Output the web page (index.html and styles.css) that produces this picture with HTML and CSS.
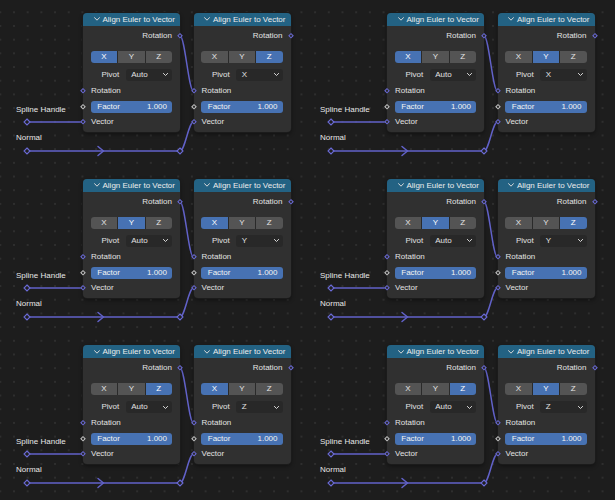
FILE: index.html
```html
<!DOCTYPE html>
<html lang="en">
<head>
<meta charset="utf-8">
<title>Align Euler to Vector</title>
<link rel="stylesheet" href="styles.css">
</head>
<body>
<main class="canvas">

  <!-- group 1 -->
  <section class="group">
    <svg class="links" width="304" height="166" viewBox="0 0 304 166">
      <path class="wire" d="M27 122H83"/>
      <path class="wire" d="M27 151H180"/>
      <path class="wire" d="M98 146.5L103.5 151L98 155.5"/>
      <path class="wire" d="M180 36C185 36 188.5 91 193.5 91"/>
      <path class="wire" d="M180 151C185 151 188.5 122 193.5 122"/>
      <path class="knob" d="M27 119L30 122L27 125L24 122Z"/>
      <path class="knob" d="M27 148L30 151L27 154L24 151Z"/>
      <path class="knob" d="M180 148L183 151L180 154L177 151Z"/>
    </svg>
    <span class="tag tag-spline">Spline Handle</span>
    <span class="tag tag-normal">Normal</span>
    <div class="node node-a">
      <div class="node-header"><svg class="chev" width="6" height="4" viewBox="0 0 6 4"><path d="M0.5 0.6L3 3.2L5.5 0.6"/></svg><span>Align Euler to Vector</span></div>
      <div class="node-body">
        <div class="row row-out">Rotation<i class="sock sock-out"></i></div>
        <div class="seg"><span class="on">X</span><span>Y</span><span>Z</span></div>
        <div class="prop"><span class="prop-label">Pivot</span><span class="dropdown">Auto<svg class="dd-chev" width="5" height="3" viewBox="0 0 5 3"><path d="M0.4 0.4L2.5 2.5L4.6 0.4"/></svg></span></div>
        <div class="row">Rotation<i class="sock"></i></div>
        <div class="row-slider"><div class="slider"><span>Factor</span><span>1.000</span></div><i class="sock sock-float"></i></div>
        <div class="row">Vector<i class="sock"></i></div>
      </div>
    </div>
    <div class="node node-b">
      <div class="node-header"><svg class="chev" width="6" height="4" viewBox="0 0 6 4"><path d="M0.5 0.6L3 3.2L5.5 0.6"/></svg><span>Align Euler to Vector</span></div>
      <div class="node-body">
        <div class="row row-out">Rotation<i class="sock sock-out"></i></div>
        <div class="seg"><span>X</span><span>Y</span><span class="on">Z</span></div>
        <div class="prop"><span class="prop-label">Pivot</span><span class="dropdown">X<svg class="dd-chev" width="5" height="3" viewBox="0 0 5 3"><path d="M0.4 0.4L2.5 2.5L4.6 0.4"/></svg></span></div>
        <div class="row">Rotation<i class="sock"></i></div>
        <div class="row-slider"><div class="slider"><span>Factor</span><span>1.000</span></div><i class="sock sock-float"></i></div>
        <div class="row">Vector<i class="sock"></i></div>
      </div>
    </div>
  </section>

  <!-- group 2 -->
  <section class="group">
    <svg class="links" width="304" height="166" viewBox="0 0 304 166">
      <path class="wire" d="M27 122H83"/>
      <path class="wire" d="M27 151H180"/>
      <path class="wire" d="M98 146.5L103.5 151L98 155.5"/>
      <path class="wire" d="M180 36C185 36 188.5 91 193.5 91"/>
      <path class="wire" d="M180 151C185 151 188.5 122 193.5 122"/>
      <path class="knob" d="M27 119L30 122L27 125L24 122Z"/>
      <path class="knob" d="M27 148L30 151L27 154L24 151Z"/>
      <path class="knob" d="M180 148L183 151L180 154L177 151Z"/>
    </svg>
    <span class="tag tag-spline">Spline Handle</span>
    <span class="tag tag-normal">Normal</span>
    <div class="node node-a">
      <div class="node-header"><svg class="chev" width="6" height="4" viewBox="0 0 6 4"><path d="M0.5 0.6L3 3.2L5.5 0.6"/></svg><span>Align Euler to Vector</span></div>
      <div class="node-body">
        <div class="row row-out">Rotation<i class="sock sock-out"></i></div>
        <div class="seg"><span class="on">X</span><span>Y</span><span>Z</span></div>
        <div class="prop"><span class="prop-label">Pivot</span><span class="dropdown">Auto<svg class="dd-chev" width="5" height="3" viewBox="0 0 5 3"><path d="M0.4 0.4L2.5 2.5L4.6 0.4"/></svg></span></div>
        <div class="row">Rotation<i class="sock"></i></div>
        <div class="row-slider"><div class="slider"><span>Factor</span><span>1.000</span></div><i class="sock sock-float"></i></div>
        <div class="row">Vector<i class="sock"></i></div>
      </div>
    </div>
    <div class="node node-b">
      <div class="node-header"><svg class="chev" width="6" height="4" viewBox="0 0 6 4"><path d="M0.5 0.6L3 3.2L5.5 0.6"/></svg><span>Align Euler to Vector</span></div>
      <div class="node-body">
        <div class="row row-out">Rotation<i class="sock sock-out"></i></div>
        <div class="seg"><span>X</span><span class="on">Y</span><span>Z</span></div>
        <div class="prop"><span class="prop-label">Pivot</span><span class="dropdown">X<svg class="dd-chev" width="5" height="3" viewBox="0 0 5 3"><path d="M0.4 0.4L2.5 2.5L4.6 0.4"/></svg></span></div>
        <div class="row">Rotation<i class="sock"></i></div>
        <div class="row-slider"><div class="slider"><span>Factor</span><span>1.000</span></div><i class="sock sock-float"></i></div>
        <div class="row">Vector<i class="sock"></i></div>
      </div>
    </div>
  </section>

  <!-- group 3 -->
  <section class="group">
    <svg class="links" width="304" height="166" viewBox="0 0 304 166">
      <path class="wire" d="M27 122H83"/>
      <path class="wire" d="M27 151H180"/>
      <path class="wire" d="M98 146.5L103.5 151L98 155.5"/>
      <path class="wire" d="M180 36C185 36 188.5 91 193.5 91"/>
      <path class="wire" d="M180 151C185 151 188.5 122 193.5 122"/>
      <path class="knob" d="M27 119L30 122L27 125L24 122Z"/>
      <path class="knob" d="M27 148L30 151L27 154L24 151Z"/>
      <path class="knob" d="M180 148L183 151L180 154L177 151Z"/>
    </svg>
    <span class="tag tag-spline">Spline Handle</span>
    <span class="tag tag-normal">Normal</span>
    <div class="node node-a">
      <div class="node-header"><svg class="chev" width="6" height="4" viewBox="0 0 6 4"><path d="M0.5 0.6L3 3.2L5.5 0.6"/></svg><span>Align Euler to Vector</span></div>
      <div class="node-body">
        <div class="row row-out">Rotation<i class="sock sock-out"></i></div>
        <div class="seg"><span>X</span><span class="on">Y</span><span>Z</span></div>
        <div class="prop"><span class="prop-label">Pivot</span><span class="dropdown">Auto<svg class="dd-chev" width="5" height="3" viewBox="0 0 5 3"><path d="M0.4 0.4L2.5 2.5L4.6 0.4"/></svg></span></div>
        <div class="row">Rotation<i class="sock"></i></div>
        <div class="row-slider"><div class="slider"><span>Factor</span><span>1.000</span></div><i class="sock sock-float"></i></div>
        <div class="row">Vector<i class="sock"></i></div>
      </div>
    </div>
    <div class="node node-b">
      <div class="node-header"><svg class="chev" width="6" height="4" viewBox="0 0 6 4"><path d="M0.5 0.6L3 3.2L5.5 0.6"/></svg><span>Align Euler to Vector</span></div>
      <div class="node-body">
        <div class="row row-out">Rotation<i class="sock sock-out"></i></div>
        <div class="seg"><span class="on">X</span><span>Y</span><span>Z</span></div>
        <div class="prop"><span class="prop-label">Pivot</span><span class="dropdown">Y<svg class="dd-chev" width="5" height="3" viewBox="0 0 5 3"><path d="M0.4 0.4L2.5 2.5L4.6 0.4"/></svg></span></div>
        <div class="row">Rotation<i class="sock"></i></div>
        <div class="row-slider"><div class="slider"><span>Factor</span><span>1.000</span></div><i class="sock sock-float"></i></div>
        <div class="row">Vector<i class="sock"></i></div>
      </div>
    </div>
  </section>

  <!-- group 4 -->
  <section class="group">
    <svg class="links" width="304" height="166" viewBox="0 0 304 166">
      <path class="wire" d="M27 122H83"/>
      <path class="wire" d="M27 151H180"/>
      <path class="wire" d="M98 146.5L103.5 151L98 155.5"/>
      <path class="wire" d="M180 36C185 36 188.5 91 193.5 91"/>
      <path class="wire" d="M180 151C185 151 188.5 122 193.5 122"/>
      <path class="knob" d="M27 119L30 122L27 125L24 122Z"/>
      <path class="knob" d="M27 148L30 151L27 154L24 151Z"/>
      <path class="knob" d="M180 148L183 151L180 154L177 151Z"/>
    </svg>
    <span class="tag tag-spline">Spline Handle</span>
    <span class="tag tag-normal">Normal</span>
    <div class="node node-a">
      <div class="node-header"><svg class="chev" width="6" height="4" viewBox="0 0 6 4"><path d="M0.5 0.6L3 3.2L5.5 0.6"/></svg><span>Align Euler to Vector</span></div>
      <div class="node-body">
        <div class="row row-out">Rotation<i class="sock sock-out"></i></div>
        <div class="seg"><span>X</span><span class="on">Y</span><span>Z</span></div>
        <div class="prop"><span class="prop-label">Pivot</span><span class="dropdown">Auto<svg class="dd-chev" width="5" height="3" viewBox="0 0 5 3"><path d="M0.4 0.4L2.5 2.5L4.6 0.4"/></svg></span></div>
        <div class="row">Rotation<i class="sock"></i></div>
        <div class="row-slider"><div class="slider"><span>Factor</span><span>1.000</span></div><i class="sock sock-float"></i></div>
        <div class="row">Vector<i class="sock"></i></div>
      </div>
    </div>
    <div class="node node-b">
      <div class="node-header"><svg class="chev" width="6" height="4" viewBox="0 0 6 4"><path d="M0.5 0.6L3 3.2L5.5 0.6"/></svg><span>Align Euler to Vector</span></div>
      <div class="node-body">
        <div class="row row-out">Rotation<i class="sock sock-out"></i></div>
        <div class="seg"><span>X</span><span>Y</span><span class="on">Z</span></div>
        <div class="prop"><span class="prop-label">Pivot</span><span class="dropdown">Y<svg class="dd-chev" width="5" height="3" viewBox="0 0 5 3"><path d="M0.4 0.4L2.5 2.5L4.6 0.4"/></svg></span></div>
        <div class="row">Rotation<i class="sock"></i></div>
        <div class="row-slider"><div class="slider"><span>Factor</span><span>1.000</span></div><i class="sock sock-float"></i></div>
        <div class="row">Vector<i class="sock"></i></div>
      </div>
    </div>
  </section>

  <!-- group 5 -->
  <section class="group">
    <svg class="links" width="304" height="166" viewBox="0 0 304 166">
      <path class="wire" d="M27 122H83"/>
      <path class="wire" d="M27 151H180"/>
      <path class="wire" d="M98 146.5L103.5 151L98 155.5"/>
      <path class="wire" d="M180 36C185 36 188.5 91 193.5 91"/>
      <path class="wire" d="M180 151C185 151 188.5 122 193.5 122"/>
      <path class="knob" d="M27 119L30 122L27 125L24 122Z"/>
      <path class="knob" d="M27 148L30 151L27 154L24 151Z"/>
      <path class="knob" d="M180 148L183 151L180 154L177 151Z"/>
    </svg>
    <span class="tag tag-spline">Spline Handle</span>
    <span class="tag tag-normal">Normal</span>
    <div class="node node-a">
      <div class="node-header"><svg class="chev" width="6" height="4" viewBox="0 0 6 4"><path d="M0.5 0.6L3 3.2L5.5 0.6"/></svg><span>Align Euler to Vector</span></div>
      <div class="node-body">
        <div class="row row-out">Rotation<i class="sock sock-out"></i></div>
        <div class="seg"><span>X</span><span>Y</span><span class="on">Z</span></div>
        <div class="prop"><span class="prop-label">Pivot</span><span class="dropdown">Auto<svg class="dd-chev" width="5" height="3" viewBox="0 0 5 3"><path d="M0.4 0.4L2.5 2.5L4.6 0.4"/></svg></span></div>
        <div class="row">Rotation<i class="sock"></i></div>
        <div class="row-slider"><div class="slider"><span>Factor</span><span>1.000</span></div><i class="sock sock-float"></i></div>
        <div class="row">Vector<i class="sock"></i></div>
      </div>
    </div>
    <div class="node node-b">
      <div class="node-header"><svg class="chev" width="6" height="4" viewBox="0 0 6 4"><path d="M0.5 0.6L3 3.2L5.5 0.6"/></svg><span>Align Euler to Vector</span></div>
      <div class="node-body">
        <div class="row row-out">Rotation<i class="sock sock-out"></i></div>
        <div class="seg"><span class="on">X</span><span>Y</span><span>Z</span></div>
        <div class="prop"><span class="prop-label">Pivot</span><span class="dropdown">Z<svg class="dd-chev" width="5" height="3" viewBox="0 0 5 3"><path d="M0.4 0.4L2.5 2.5L4.6 0.4"/></svg></span></div>
        <div class="row">Rotation<i class="sock"></i></div>
        <div class="row-slider"><div class="slider"><span>Factor</span><span>1.000</span></div><i class="sock sock-float"></i></div>
        <div class="row">Vector<i class="sock"></i></div>
      </div>
    </div>
  </section>

  <!-- group 6 -->
  <section class="group">
    <svg class="links" width="304" height="166" viewBox="0 0 304 166">
      <path class="wire" d="M27 122H83"/>
      <path class="wire" d="M27 151H180"/>
      <path class="wire" d="M98 146.5L103.5 151L98 155.5"/>
      <path class="wire" d="M180 36C185 36 188.5 91 193.5 91"/>
      <path class="wire" d="M180 151C185 151 188.5 122 193.5 122"/>
      <path class="knob" d="M27 119L30 122L27 125L24 122Z"/>
      <path class="knob" d="M27 148L30 151L27 154L24 151Z"/>
      <path class="knob" d="M180 148L183 151L180 154L177 151Z"/>
    </svg>
    <span class="tag tag-spline">Spline Handle</span>
    <span class="tag tag-normal">Normal</span>
    <div class="node node-a">
      <div class="node-header"><svg class="chev" width="6" height="4" viewBox="0 0 6 4"><path d="M0.5 0.6L3 3.2L5.5 0.6"/></svg><span>Align Euler to Vector</span></div>
      <div class="node-body">
        <div class="row row-out">Rotation<i class="sock sock-out"></i></div>
        <div class="seg"><span>X</span><span>Y</span><span class="on">Z</span></div>
        <div class="prop"><span class="prop-label">Pivot</span><span class="dropdown">Auto<svg class="dd-chev" width="5" height="3" viewBox="0 0 5 3"><path d="M0.4 0.4L2.5 2.5L4.6 0.4"/></svg></span></div>
        <div class="row">Rotation<i class="sock"></i></div>
        <div class="row-slider"><div class="slider"><span>Factor</span><span>1.000</span></div><i class="sock sock-float"></i></div>
        <div class="row">Vector<i class="sock"></i></div>
      </div>
    </div>
    <div class="node node-b">
      <div class="node-header"><svg class="chev" width="6" height="4" viewBox="0 0 6 4"><path d="M0.5 0.6L3 3.2L5.5 0.6"/></svg><span>Align Euler to Vector</span></div>
      <div class="node-body">
        <div class="row row-out">Rotation<i class="sock sock-out"></i></div>
        <div class="seg"><span>X</span><span class="on">Y</span><span>Z</span></div>
        <div class="prop"><span class="prop-label">Pivot</span><span class="dropdown">Z<svg class="dd-chev" width="5" height="3" viewBox="0 0 5 3"><path d="M0.4 0.4L2.5 2.5L4.6 0.4"/></svg></span></div>
        <div class="row">Rotation<i class="sock"></i></div>
        <div class="row-slider"><div class="slider"><span>Factor</span><span>1.000</span></div><i class="sock sock-float"></i></div>
        <div class="row">Vector<i class="sock"></i></div>
      </div>
    </div>
  </section>

</main>
</body>
</html>
```

FILE: styles.css
```css
* { box-sizing: border-box; }

html, body {
  margin: 0;
  width: 615px;
  height: 500px;
  overflow: hidden;
}

body {
  background-color: #1d1d1d;
  background-image: radial-gradient(circle, #2e2e2e 0.9px, rgba(29,29,29,0) 1.3px);
  background-size: 13.7px 13.7px;
  background-position: 7.15px 5.45px;
  font-family: "Liberation Sans", Arial, sans-serif;
  font-size: 8px;
  color: #e2e2e2;
}

.canvas {
  display: grid;
  grid-template-columns: 304px 311px;
  grid-auto-rows: 166.2px;
}

.group {
  position: relative;
}

.links {
  position: absolute;
  left: 0;
  top: 0;
  overflow: visible;
}

.wire {
  fill: none;
  stroke: #6262c9;
  stroke-width: 1.5;
  stroke-linejoin: round;
  stroke-linecap: round;
}

.knob {
  fill: #202020;
  stroke: #6b6bd8;
  stroke-width: 1.1;
}

.tag {
  position: absolute;
  left: 16px;
  line-height: 10px;
  color: #e6e6e6;
  white-space: nowrap;
}
.tag-spline { top: 105px; }
.tag-normal { top: 133px; }

/* node */
.node {
  position: absolute;
  top: 12.5px;
  width: 97px;
  background: #303030;
  border-radius: 4px;
  box-shadow: 0 0 0 1px #1b1b1b, 0 2px 4px rgba(0,0,0,0.45);
}
.node-a { left: 83px; }
.node-b { left: 193.5px; }

.node-header {
  height: 13.5px;
  background: #236283;
  border-radius: 4px 4px 0 0;
  display: flex;
  align-items: center;
  gap: 3px;
  padding-left: 10.5px;
  color: #ececec;
  white-space: nowrap;
}
.chev {
  display: block;
  flex: none;
}
.chev path, .dd-chev path {
  fill: none;
  stroke: #d8d8d8;
  stroke-width: 1;
  stroke-linecap: round;
  stroke-linejoin: round;
}

.node-body {
  padding: 3px 0 3px;
  display: flex;
  flex-direction: column;
}

.row {
  position: relative;
  height: 14px;
  line-height: 14px;
  padding: 0 8px;
  white-space: nowrap;
}
.row-out { text-align: right; }
.node-body .row:nth-child(4) { margin-top: 3.5px; }
.node-body .row:nth-child(6) { margin-top: 2px; }

.sock {
  position: absolute;
  left: 0;
  top: 50%;
  width: 4.4px;
  height: 4.4px;
  border: 1.1px solid #6b6bd8;
  background: #262626;
  transform: translate(-50%, -50%) rotate(45deg);
}
.sock-out { left: 100%; }
.sock-float { border-color: #c4c4c4; }

/* segmented xyz */
.seg {
  margin: 8px 8px 0 7.7px;
  height: 12px;
  display: flex;
  gap: 1px;
  background: #2a2a2a;
  border-radius: 3px;
  overflow: hidden;
}
.seg span {
  flex: 1;
  background: #545454;
  text-align: center;
  line-height: 12px;
  color: #e6e6e6;
}
.seg span.on {
  background: #4772b3;
  color: #ffffff;
}

/* pivot property */
.prop {
  margin: 6px 8px 0 7.7px;
  height: 11.5px;
  display: grid;
  grid-template-columns: 1fr 46.3px;
  column-gap: 6.5px;
  align-items: center;
}
.prop-label {
  text-align: right;
  line-height: 11.5px;
}
.dropdown {
  height: 11.5px;
  background: #282828;
  border-radius: 3px;
  display: flex;
  align-items: center;
  justify-content: space-between;
  padding: 0 4px 0 5.5px;
  line-height: 11.5px;
}
.dd-chev { display: block; flex: none; }

/* factor slider */
.row-slider {
  position: relative;
  margin-top: 3px;
  padding: 0 8px 0 7.7px;
}
.slider {
  height: 12px;
  background: #4772b3;
  border-radius: 3px;
  display: flex;
  justify-content: space-between;
  align-items: center;
  padding: 0 5px 0 6.6px;
  line-height: 12px;
  color: #f2f2f2;
}
```
